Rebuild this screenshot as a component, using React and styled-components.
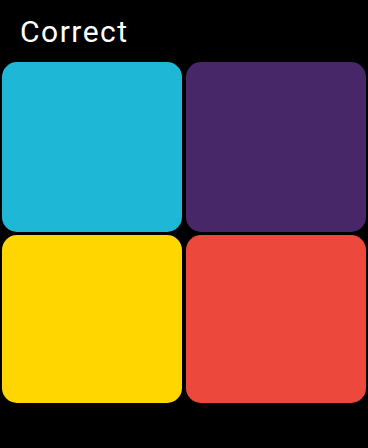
import React from "react";
import styled, { createGlobalStyle } from "styled-components";

const Global = createGlobalStyle`
  html, body { margin: 0; padding: 0; background: #000; }
  body { width: 368px; height: 448px; overflow: hidden; }
`;

const Screen = styled.div`
  width: 368px;
  height: 448px;
  background: #000;
  display: flex;
  flex-direction: column;
  box-sizing: border-box;
  padding: 12px 2px 0 2px;
`;

const Title = styled.h1`
  margin: 0 0 0 18px;
  height: 50px;
  font-family: Roboto, "Noto Sans", sans-serif;
  font-weight: 400;
  font-size: 30px;
  line-height: 40px;
  letter-spacing: 1.5px;
  color: #fff;
`;

const Grid = styled.div`
  display: grid;
  grid-template-columns: 180px 180px;
  grid-template-rows: 170px 168px;
  column-gap: 4px;
  row-gap: 3px;
`;

const Tile = styled.div`
  background: ${(p) => p.$color};
  border-radius: 15px;
`;

export default function App() {
  return (
    <>
      <Global />
      <Screen>
        <Title>Correct</Title>
        <Grid>
          <Tile $color="#1eb8d6" />
          <Tile $color="#472768" />
          <Tile $color="#ffd600" />
          <Tile $color="#ec483b" />
        </Grid>
      </Screen>
    </>
  );
}
